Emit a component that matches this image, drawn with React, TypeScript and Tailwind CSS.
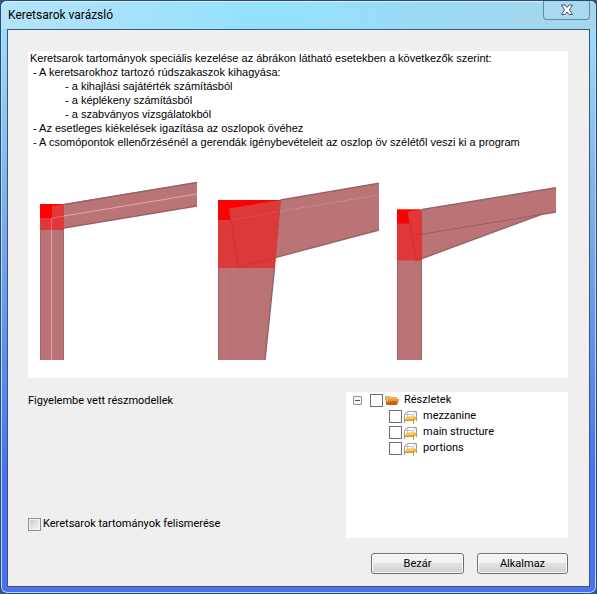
import { useState } from "react";

const notes = [
	{ text: "Keretsarok tartományok speciális kezelése az ábrákon látható esetekben a következők szerint:", indent: "pl-0.5" },
	{ text: "- A keretsarokhoz tartozó rúdszakaszok kihagyása:", indent: "pl-[5px]" },
	{ text: "- a kihajlási sajátérték számításból", indent: "pl-[37px]" },
	{ text: "- a képlékeny számításból", indent: "pl-[37px]" },
	{ text: "- a szabványos vizsgálatokból", indent: "pl-[37px]" },
	{ text: "- Az esetleges kiékelések igazítása az oszlopok övéhez", indent: "pl-[5px]" },
	{ text: "- A csomópontok ellenőrzésénél a gerendák igénybevételeit az oszlop öv szélétől veszi ki a program", indent: "pl-[5px]" },
];

const submodels = ["mezzanine", "main structure", "portions"];

const CornerFigures = () => (
	<svg className="block w-full" viewBox="28 149 540 229" fill="none" role="img" aria-label="Keretsarok ábrák">
		{/* Straight column and beam */}
		<path d="M40 230H64V360H40Z" fill="#bb7475" />
		<path d="M64 204 197 182V206L64 228Z" fill="#bb7475" />
		<path d="M40.5 230V360M63.5 230V360" stroke="#a76669" />
		<path d="M64 204.500 197 182.500M64 228 197 206" stroke="#94656b" strokeWidth="1.500" />
		<path d="M40 204H64V230H40Z" fill="#df373a" />
		<path d="M40 204H64L52 206V218H40Z" fill="#ff0000" />
		<path d="M51.500 218V230M52 218 64 216" stroke="#e66a6b" />
		<path d="M51.500 230V360M64 216 197 194" stroke="#d9a9aa" />

		{/* Tapered column and beam */}
		<path d="M218 268H274.500L265 360H218Z" fill="#bb7475" />
		<path d="M280.500 200 379 183V230L275.500 257.500Z" fill="#bb7475" />
		<path d="M218.500 268V360" stroke="#a76669" />
		<path d="M274.500 268 265 360M280.500 200 379 183.300M275.500 257.500 379 230" stroke="#94656b" strokeWidth="1.500" />
		<path d="M230.500 268V360" stroke="#b56e70" />
		<path d="M279 211.500 379 195" stroke="#c68889" />
		<path d="M218 200H280.500L274.500 268H218Z" fill="#dc393b" />
		<path d="M218 200H280.500L229 208.500 231 220H218Z" fill="#ff0000" />
		<path d="M229 208.500 238.500 267 275.500 257.500" stroke="#c93438" />
		<path d="M231 220 279 211.500" stroke="#e04a4c" />
		<path d="M280.500 200 274.500 268" stroke="#c9383c" />

		{/* Haunched beam */}
		<path d="M397 260H422V360H397Z" fill="#bb7475" />
		<path d="M422 209.500 556 187.500V212L541 214.500 422 258.500Z" fill="#bb7475" />
		<path d="M397.500 260V360M421.500 260V360" stroke="#a76669" />
		<path d="M422 209.500 556 187.800M422 258.500 541 214.500 556 212" stroke="#94656b" strokeWidth="1.500" />
		<path d="M422 234.200 541 214.500" stroke="#a05c60" />
		<path d="M397 209.500H422V260.500H397Z" fill="#df373a" />
		<path d="M397 209.500H422L408 211.500 409.500 223.500H397Z" fill="#ff0000" />
		<path d="M408 211.500 416 260.500 422 258.500M412 236 422 234.200" stroke="#c93438" />
	</svg>
);

const FolderIcon = () => (
	<svg className="h-4 w-4 shrink-0" viewBox="0 0 16 16" aria-hidden="true">
		<path d="M1 4H6L7 5.500H13V13H2.500Z" fill="#a9540f" />
		<path d="M1 4H6L7 5.500H13L12.500 7.500H5L3 11Z" fill="#e9b763" />
		<path d="M5 7H15L13 13H2.500Z" fill="#c8640c" />
		<path d="M5 7H15L14.300 9.500Q9 8.500 4 10Z" fill="#ec9a35" />
	</svg>
);

const ModelIcon = () => (
	<svg className="h-4 w-4 shrink-0" viewBox="0 0 16 16" fill="none" aria-hidden="true">
		<path d="M1.500 15V6L4.500 3.500H13.500V12" stroke="#9c9c9c" />
		<path d="M1.500 6.500H10.500L13.500 3.500M10.500 6.500V9M4.500 3.500V9" stroke="#c4c4c4" />
		<path d="M4 8.500H14L11 12.500H1Z" fill="#f6c455" />
		<path d="M1 11.500H11L14 8.500V10L11 13H1Z" fill="#dc981b" />
		<path d="M1.500 12.500V15M10.500 12.500V15.500M13.500 10V13" stroke="#999" />
	</svg>
);

const treeBox = "m-0 h-[13px] w-[13px] shrink-0 appearance-none border border-[#707070] bg-white checked:bg-[#4b77b5]";
const button = "h-[21px] rounded-[3px] border border-[#707070] bg-linear-to-b from-[#f3f3f3] from-45% via-[#e3e3e3] via-50% to-[#cfcfcf] text-center leading-none shadow-[inset_0_0_0_1px_#fafafa]";

export default function App() {
	const [isExpanded, setIsExpanded] = useState(true);

	return (
		<div className="min-h-screen bg-[#3b5478] font-['Roboto',sans-serif] text-[11px] text-black">
			<div className="flex min-h-screen flex-col rounded-[7px] border border-[#2c4a72] bg-linear-to-b from-[#9adcf8] from-5% via-[#7ba6ea] via-40% to-[#4d6ff0] to-80% px-[6px] pb-[6px] shadow-[inset_0_0_0_1px_#b5dcf8]">
				{/* Title bar */}
				<header className="-mx-[6px] flex h-7 items-start justify-between rounded-t-[6px] bg-linear-to-r from-[#b4e4f8] via-[#93e0fd] via-45% to-[#a4d5ec] pr-[6px] pl-[7px] shadow-[inset_0_1px_0_#d4f1fc]">
					<h1 className="pt-1 text-[12px] leading-5">Keretsarok varázsló</h1>
					<button type="button" aria-label="Bezárás" className="flex h-[19px] w-[47px] items-center justify-center rounded-b-[4px] border border-t-0 border-[#5d8ba8] bg-[#a9d9ef]">
						<svg className="h-3 w-3" viewBox="0 0 12 12" aria-hidden="true">
							<path d="M0.500 1H4L6 3.500 8 1H11.500L8.500 5.800 11.500 10.500H8L6 8 4 10.500H0.500L3.500 5.800Z" fill="#fff" stroke="#49566b" strokeLinejoin="round" />
						</svg>
					</button>
				</header>

				<main className="flex flex-1 flex-col border border-[#38577f] bg-[#efefef] pt-[21px] pr-[21px] pb-3 pl-5">
					<section className="bg-white">
						<div className="font-['Liberation_Sans',sans-serif] leading-[14px]">
							{notes.map((note) => (
								<p key={note.text} className={note.indent}>{note.text}</p>
							))}
						</div>
						<CornerFigures />
					</section>

					<div className="mt-[14px] flex flex-1">
						<div className="flex flex-1 flex-col justify-between pt-[1px] pb-[6px]">
							<h2 className="leading-4">Figyelembe vett részmodellek</h2>
							<label className="flex items-center gap-0.5 leading-4">
								<input type="checkbox" className="m-0 h-[13px] w-[13px] appearance-none border border-[#8e8f8f] bg-linear-to-br from-[#c8cbcd] to-[#f6f6f6] shadow-[inset_0_0_0_1px_#f4f4f4] checked:from-[#4b77b5]" />
								Keretsarok tartományok felismerése
							</label>
						</div>

						{/* Submodel tree */}
						<div className="w-[222px] bg-white pl-[7px] leading-4">
							<div className="flex items-center">
								<button
									type="button"
									aria-label="Részletek"
									aria-expanded={isExpanded}
									onClick={() => setIsExpanded(!isExpanded)}
									className="mr-2 flex h-[9px] w-[9px] items-center justify-center rounded-[1px] border border-[#919191] bg-[#f6f6f6]"
								>
									<span className="h-px w-[5px] bg-[#3b4f81]" />
								</button>
								<label className="flex items-center">
									<input type="checkbox" className={treeBox} />
									<span className="mr-1 ml-px"><FolderIcon /></span>
									Részletek
								</label>
							</div>
							{isExpanded && submodels.map((name) => (
								<label key={name} className="flex items-center pl-9">
									<input type="checkbox" className={treeBox} />
									<span className="mr-1 ml-px"><ModelIcon /></span>
									{name}
								</label>
							))}
						</div>
					</div>

					<footer className="mt-[15px] flex justify-end gap-[13px]">
						<button type="button" className={`${button} w-[93px]`}>Bezár</button>
						<button type="button" className={`${button} w-[91px]`}>Alkalmaz</button>
					</footer>
				</main>
			</div>
		</div>
	);
}
